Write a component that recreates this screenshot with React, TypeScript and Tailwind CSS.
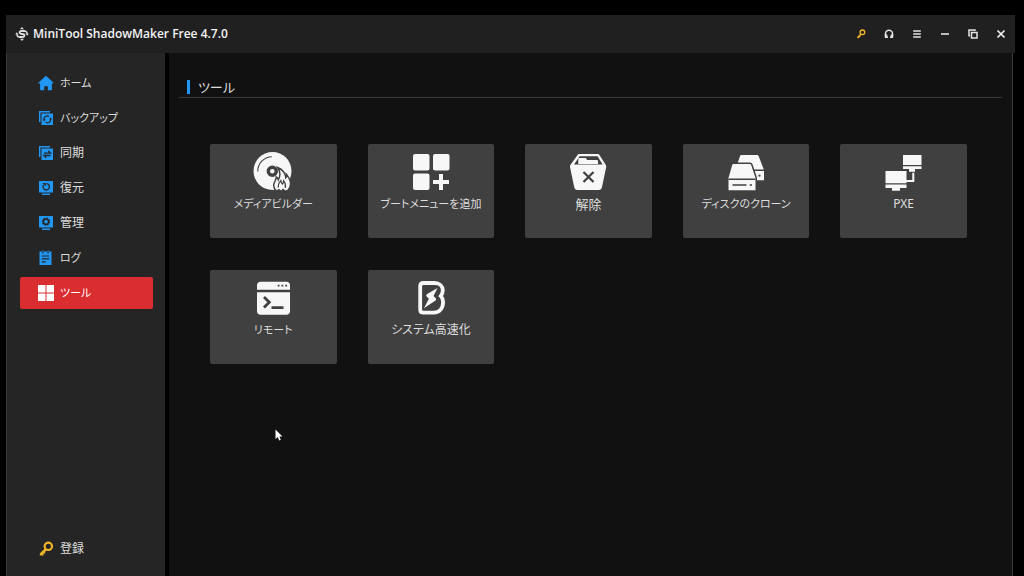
import type { ReactNode } from "react";

const BLUE = "#2196f3";
const PANEL = "#252525";
const CARD = "#404040";

function Logo() {
  return (
    <svg viewBox="0 0 14 14" className="size-3.5" fill="none" stroke="#dcdcdc" strokeWidth="1.8">
      <path d="M10.200 4H6.600C5.200 4 4.600 4.800 4.600 5.600S5.400 7 7 7s2.400.7 2.400 1.500-.6 1.500-2 1.500H3.800" />
      <path d="M.2 7.600h3.400L1.800 5.300zM13.800 6.400h-3.400l1.800 2.300z" fill="#dcdcdc" stroke="none" />
      <path d="M1.800 7.300c.2 1.300.8 2.200 2 2.700M12.200 6.700c-.2-1.300-.8-2.200-2-2.700" strokeWidth="1.500" />
      <path d="M5 2.200 7 0l2 2.200zM5 11.800 7 14l2-2.200z" fill="#dcdcdc" stroke="none" />
    </svg>
  );
}

function KeyIcon({ className }: { className: string }) {
  return (
    <svg viewBox="0 0 16 16" className={className} fill="none" stroke="#f0b429">
      <circle cx="10.300" cy="5.300" r="3.700" strokeWidth="2.200" />
      <path d="M7.200 7 1.800 12.600v2l3.700-.2v-1.900h1.700v-1.700L9 9z" fill="#f0b429" stroke="none" />
    </svg>
  );
}

function HomeIcon() {
  return (
    <svg viewBox="0 0 16 16" className="size-4" fill={BLUE}>
      <path d="M8 .8.6 7.600c-.3.400-.1.800.3.800h1.200v6.200c0 .4.300.7.700.7h3.400v-4.100h3.600v4.100h3.400c.4 0 .7-.3.700-.7V8.400h1.200c.4 0 .6-.4.300-.8z" />
    </svg>
  );
}

function BackupIcon() {
  return (
    <svg viewBox="0 0 16 16" className="size-4" fill="none">
      <path d="M1.700 12V1.700H12" stroke={BLUE} strokeWidth="1.500" />
      <path d="M3.500 3.500h11.500v11.500H3.500z" fill={BLUE} />
      <path d="M6 9.900a3.300 3.300 0 0 1 5-3.400M12.600 8.800a3.300 3.300 0 0 1-5 3.400" stroke={PANEL} strokeWidth="1.200" />
      <path d="m4.700 9 2.900.4-1.700 2zM13.900 9.600l-2.900-.4 1.700-2z" fill={PANEL} />
    </svg>
  );
}

function SyncIcon() {
  return (
    <svg viewBox="0 0 16 16" className="size-4" fill="none">
      <path d="M1.700 12V1.700H12" stroke={BLUE} strokeWidth="1.500" />
      <path d="M3.500 3.500h11.500v11.500H3.500z" fill={BLUE} />
      <path d="M6 8.200h6.500L10.300 6M12.500 10.500H6l2.200 2.200" stroke={PANEL} strokeWidth="1.300" />
    </svg>
  );
}

function RestoreIcon() {
  return (
    <svg viewBox="0 0 16 16" className="size-4" fill="none">
      <path d="M1 1h14v11.500H1zM4 13.500h8V15H4z" fill={BLUE} />
      <path d="M5.700 4.800A3.200 3.200 0 1 0 8.500 3.600" stroke={PANEL} strokeWidth="1.300" />
      <path d="M4.500 3h3.300v3.200z" fill={PANEL} />
    </svg>
  );
}

function ManageIcon() {
  return (
    <svg viewBox="0 0 16 16" className="size-4" fill="none">
      <path d="M1 1h14v11.500H1zM4 13.500h8V15H4z" fill={BLUE} />
      <circle cx="8" cy="6.700" r="2.600" stroke={PANEL} strokeWidth="1.500" />
      <circle cx="8" cy="6.700" r="3.600" stroke={PANEL} strokeWidth="1.200" strokeDasharray="1.400 1.427" />
    </svg>
  );
}

function LogIcon() {
  return (
    <svg viewBox="0 0 16 16" className="size-4" fill="none">
      <path d="M1.500 1.500H4v1.700h1.800V1.500h3.400v1.700H11V1.500h2.500V15h-12zM4.400.5h1v2h-1zM9.600.5h1v2h-1z" fill={BLUE} />
      <path d="M3.800 6h7.400M3.800 8.800h7.400M3.800 11.800h4" stroke={PANEL} strokeWidth="1.200" />
    </svg>
  );
}

function ToolsIcon() {
  return (
    <svg viewBox="0 0 16 16" className="size-4" fill="#fff">
      <path d="M0 0h7.500v7.500H0zM8.500 0H16v7.500H8.500zM0 8.500h7.500V16H0zM8.500 8.500H16V16H8.500z" />
    </svg>
  );
}

function ToolIcon({ children }: { children: ReactNode }) {
  return (
    <svg viewBox="0 0 40 40" className="size-10" fill="#f7f7f7">
      {children}
    </svg>
  );
}

function DiscIcon() {
  return (
    <ToolIcon>
      <circle cx="19.500" cy="19" r="19" />
      <path d="M4.800 19.500A14.500 14.500 0 0 1 18.800 4.700" fill="none" stroke={CARD} strokeWidth="1.100" />
      <circle cx="19.300" cy="19.200" r="4" fill="none" stroke={CARD} strokeWidth="3.400" />
      <path
        d="M23.500 39c-3-2.500-3.500-6-1.700-9.500.8-1.600 1.500-2.800 1.400-4.500 1.300.6 2 1.600 2.200 2.800 2-3.600 2.200-7.800-.8-12.300 5 2 7.800 6 8.200 10.300.8-.8 1-2 .8-3.300 3.400 4.300 5.800 10.800 1.200 16l-1.500.9z"
        stroke={CARD}
        strokeWidth="1.400"
      />
      <path d="M25.500 35.500c-.8-2.500.4-4.500 2.300-7 .2 1.800.8 2.800 1.600 3.600.8-1 1.200-2 1.200-3.300 2 2.300 2.300 4.400 1.700 7" fill="none" stroke={CARD} strokeWidth="1.200" />
      <path d="m21.500 40 4.300-3.200 2.200 1.700 2-2 2.300 2 2.200-.8V40z" fill={CARD} />
    </ToolIcon>
  );
}

function AddMenuIcon() {
  return (
    <ToolIcon>
      <rect x="2" y="2" width="16.500" height="16.500" rx="2" />
      <rect x="22" y="2" width="16.500" height="16.500" rx="2" />
      <rect x="2" y="21.500" width="16.500" height="16.500" rx="2" />
      <path d="M28 22h4v6h6v4h-6v6h-4v-6h-6v-4h6z" />
    </ToolIcon>
  );
}

function UnmountIcon() {
  return (
    <ToolIcon>
      <path d="M11.500 2h18c1 0 1.800.5 2.300 1.500l6 9.500c.4.700.5 1.300.4 2L34 35c-.3 2-1.500 3-3.300 3H9.500c-1.800 0-3-1-3.300-3L2 15c-.1-.7 0-1.300.4-2l6.800-9.500C9.700 2.500 10.500 2 11.500 2z" />
      <path d="M11.600 4.200h18l5 8.300H6z" fill={CARD} />
      <path d="M10.300 12V7c0-.6.400-1 1-1h6.500l1.400 2h9.500c.8 0 1.300.5 1.300 1.200V12z" />
      <path d="m15.500 20 10 10M25.500 20l-10 10" fill="none" stroke={CARD} strokeWidth="2.200" />
    </ToolIcon>
  );
}

function CloneIcon() {
  return (
    <ToolIcon>
      <path d="M15.500 3h15.500c.8 0 1.400.4 1.700 1.200L37.800 17.500H26L11 13l3-9c.2-.6.800-1 1.500-1zM28 19h10v9.300H28z" />
      <circle cx="33.500" cy="23.700" r="1.100" fill={CARD} />
      <path d="M7.500 12h16.300c.7 0 1.200.4 1.400 1L29.500 26v12.200h-27V26L6.200 13c.2-.6.700-1 1.300-1z" stroke={CARD} strokeWidth="3" />
      <path d="M7.500 12h16.300c.7 0 1.200.4 1.400 1L29.500 26v12.200h-27V26L6.200 13c.2-.6.700-1 1.300-1z" />
      <path d="M2.500 27.200h27M6.500 33h14M23.700 33H26" fill="none" stroke={CARD} strokeWidth="1.400" />
    </ToolIcon>
  );
}

function PxeIcon() {
  return (
    <ToolIcon>
      <path d="M19 3h18.500v10H19zM19 14.200h18.500V17H19zM25 17h6v2.700h-6z" />
      <path d="M1.500 19h21v12.200h-21zM1.500 32.500h21V36h-21zM8 36h8v2.700H8z" />
      <path d="M29.300 20.700V29H22" fill="none" stroke="#f7f7f7" strokeWidth="2" />
    </ToolIcon>
  );
}

function RemoteIcon() {
  return (
    <ToolIcon>
      <path d="M7.500 3.700h26c2 0 3.500 1.500 3.500 3.500v4.500H4V7.200c0-2 1.500-3.500 3.500-3.500zM4 14.300h33v19c0 2-1.500 3.500-3.500 3.500h-26c-2 0-3.500-1.500-3.500-3.500z" />
      <path d="M24.700 7.700h1.800M28.500 7.700h1.800M32.300 7.700h1.800" stroke={CARD} strokeWidth="1.800" />
      <path d="m11 19 5.300 5.300-5.300 5.300M18.500 29.700h12" fill="none" stroke={CARD} strokeWidth="2.800" />
    </ToolIcon>
  );
}

function BoosterIcon() {
  return (
    <ToolIcon>
      <path
        d="M12.500 5h11c5 0 8.300 3.200 8.300 7.300 0 2.500-.8 4.200-2 5.700 1.500 1.500 2.300 3.500 2.300 6 0 6-3.500 10.700-9.300 10.700H12.500c-2 0-3.300-1.300-3.300-3.300V8.300C9.200 6.300 10.500 5 12.500 5z"
        fill="none"
        stroke="#f7f7f7"
        strokeWidth="3.800"
      />
      <path d="m26.500 10-10.300 6c-1.300.8-1.300 1.800-.3 2.800l2 2-5 9.500 11.300-7.500c1.200-.8 1.200-1.800.3-2.800l-2-2z" />
    </ToolIcon>
  );
}

const NAV_ITEMS = [
  { label: "ホーム", icon: <HomeIcon />, size: "text-[11px]" },
  { label: "バックアップ", icon: <BackupIcon />, size: "text-[11px]" },
  { label: "同期", icon: <SyncIcon />, size: "text-xs" },
  { label: "復元", icon: <RestoreIcon />, size: "text-xs" },
  { label: "管理", icon: <ManageIcon />, size: "text-xs" },
  { label: "ログ", icon: <LogIcon />, size: "text-[11px]" },
  { label: "ツール", icon: <ToolsIcon />, size: "text-[11px]", active: true },
];

const TOOLS = [
  { label: "メディアビルダー", icon: <DiscIcon />, size: "text-[11px]" },
  { label: "ブートメニューを追加", icon: <AddMenuIcon />, size: "text-[11px]" },
  { label: "解除", icon: <UnmountIcon />, size: "text-[13px]" },
  { label: "ディスクのクローン", icon: <CloneIcon />, size: "text-[11px]" },
  { label: "PXE", icon: <PxeIcon />, size: "text-xs" },
  { label: "リモート", icon: <RemoteIcon />, size: "text-[11px]" },
  { label: "システム高速化", icon: <BoosterIcon />, size: "text-xs" },
];

const WINDOW_BUTTONS = [
  { label: "登録キー", icon: <KeyIcon className="size-2.5" /> },
  {
    label: "サポート",
    icon: (
      <svg viewBox="0 0 10 10" className="size-2.5" fill="none" stroke="#e4e4e4">
        <path d="M1.500 7V4.800a3.500 3.500 0 0 1 7 0V7" strokeWidth="1.500" />
        <path d="M.8 5.500h2.300l1 3.500H.8zM6.900 5.500h2.300V9H5.900z" fill="#e4e4e4" stroke="none" />
      </svg>
    ),
  },
  {
    label: "メニュー",
    icon: (
      <svg viewBox="0 0 10 10" className="size-2.5" stroke="#e4e4e4" strokeWidth="1.500">
        <path d="M1.200 2h7.600M1.200 5h7.600M1.200 8h7.600" />
      </svg>
    ),
  },
  {
    label: "最小化",
    icon: (
      <svg viewBox="0 0 10 10" className="size-2.5" stroke="#e4e4e4" strokeWidth="1.600">
        <path d="M1 5h8" />
      </svg>
    ),
  },
  {
    label: "元に戻す",
    icon: (
      <svg viewBox="0 0 10 10" className="size-2.5" fill="none" stroke="#e4e4e4" strokeWidth="1.500">
        <path d="M3.500 3.500h5.500v5.500H3.500zM2 6.800H1V1h6v1" />
      </svg>
    ),
  },
  {
    label: "閉じる",
    icon: (
      <svg viewBox="0 0 10 10" className="size-2.5" stroke="#f0f0f0" strokeWidth="1.700">
        <path d="m1.500 1.500 7 7M8.500 1.500l-7 7" />
      </svg>
    ),
  },
];

export default function App() {
  return (
    <div className="relative flex h-screen flex-col overflow-hidden bg-black pt-[15px] pr-[9px] pl-1.5 font-['Noto_Sans','Noto_Sans_CJK_JP',sans-serif] text-[#dedede] [font-feature-settings:'palt']">
      <header className="flex h-[38px] shrink-0 items-center justify-between bg-[#202020] pl-[9px]">
        <div className="flex items-center gap-1">
          <Logo />
          <h1 className="font-['Open_Sans',sans-serif] text-xs font-semibold text-[#f4f4f4]">
            MiniTool ShadowMaker Free 4.7.0
          </h1>
        </div>
        <div className="flex">
          {WINDOW_BUTTONS.map((button) => (
            <button key={button.label} type="button" aria-label={button.label} className="flex h-7 w-7 items-center justify-center">
              {button.icon}
            </button>
          ))}
        </div>
      </header>

      <div className="mr-0.5 flex min-h-0 flex-1 border-r border-l border-[#3a3a3a]">
        <aside className="mr-1 flex w-[158px] shrink-0 flex-col justify-between bg-[#252525] pt-3.5 pr-3 pb-[11px] pl-[13px]">
          <nav className="flex flex-col gap-[3px]">
            {NAV_ITEMS.map((item) => (
              <button
                key={item.label}
                type="button"
                aria-current={item.active ? "page" : undefined}
                className={`flex h-8 items-center gap-1.5 rounded-xs pl-[18px] ${item.size} ${
                  item.active ? "bg-[#d92d30] text-white" : ""
                }`}
              >
                {item.icon}
                {item.label}
              </button>
            ))}
          </nav>
          <button type="button" className="flex h-8 items-center gap-1.5 pl-[18px] text-xs">
            <KeyIcon className="size-4" />
            登録
          </button>
        </aside>

        <main className="min-w-0 flex-1 bg-[#111111] px-2.5 pt-[26px]">
          <div className="flex items-center gap-2 border-b border-[#383838] pb-0.5 pl-2">
            <span className="h-3.5 w-[3px] bg-[#2196f3]" />
            <h2 className="text-[13px] leading-4">ツール</h2>
          </div>
          <div className="mt-[46px] mr-[35px] ml-[31px] grid grid-cols-5 gap-x-[31px] gap-y-8">
            {TOOLS.map((tool) => (
              <button
                key={tool.label}
                type="button"
                className="flex flex-col items-center gap-1 rounded-xs bg-[#404040] pt-2 pb-[26px]"
              >
                {tool.icon}
                <span className={`leading-4 whitespace-nowrap ${tool.size}`}>{tool.label}</span>
              </button>
            ))}
          </div>
        </main>
      </div>

      <svg viewBox="0 0 8 12" className="absolute top-[429px] left-[275px] h-3 w-2" fill="#fff">
        <path d="M.5.500v9.500l2.200-2 1.500 3.500 1.600-.7L4.400 7.400h3z" />
      </svg>
    </div>
  );
}
